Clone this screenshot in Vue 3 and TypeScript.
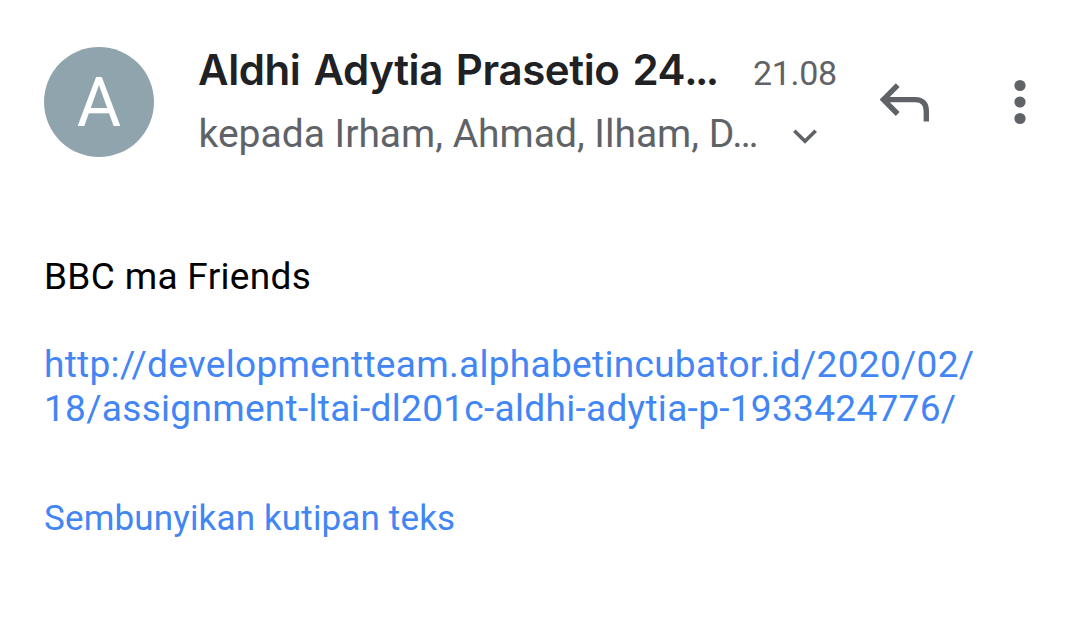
<script setup lang="ts">
const sender: string = 'Aldhi Adytia Prasetio 24'
const recipients: string = 'kepada Irham, Ahmad, Ilham, D…'
const linkLines: string[] = [
  'http://developmentteam.alphabetincubator.id/2020/02/',
  '18/assignment-ltai-dl201c-aldhi-adytia-p-1933424776/',
]
</script>

<template>
  <main class="mail">
    <header class="head">
      <div class="avatar">A</div>
      <div class="meta">
        <div class="row top">
          <span class="sender">{{ sender }}<span class="dots">...</span></span>
          <time class="time">21.08</time>
        </div>
        <div class="row sub">
          <span class="recipients">{{ recipients }}</span>
          <svg class="chevron" width="28" height="20" viewBox="0 0 28 20">
            <path d="M3.3 4.7L14 15.200L24.700 4.7" fill="none" stroke="#5f6368" stroke-width="3.7" />
          </svg>
        </div>
      </div>
      <svg class="reply" width="52" height="44" viewBox="0 0 52 44">
        <path d="M17.700 3.200L3.400 17.600L17.700 32M3.400 17.600H35.500C42.500 17.600 46.300 22 46.300 29V39.500" fill="none" stroke="#5f6368" stroke-width="5.400" />
      </svg>
      <svg class="more" width="12" height="46" viewBox="0 0 12 46">
        <circle cx="6" cy="6.500" r="5.600" fill="#5f6368" />
        <circle cx="6" cy="23" r="5.600" fill="#5f6368" />
        <circle cx="6" cy="39.500" r="5.600" fill="#5f6368" />
      </svg>
    </header>
    <p class="body">BBC ma Friends</p>
    <a class="link"><span v-for="line in linkLines" :key="line" class="line">{{ line }}</span></a>
    <a class="quote">Sembunyikan kutipan teks</a>
  </main>
</template>

<style>
body { background: #fff; }
</style>

<style scoped>
.mail { box-sizing: border-box; width: 1080px; height: 634px; padding: 47px 0 0 44px; background: #fff; font-family: Roboto, sans-serif; font-size: 37px; line-height: 44px; white-space: nowrap; overflow: hidden; }
.head { display: flex; align-items: flex-start; height: 110px; }
.avatar { width: 110px; height: 110px; border-radius: 50%; background: #90a4ae; color: #fff; font-size: 68px; line-height: 112px; text-align: center; }
.meta { width: 682px; margin-left: 44px; }
.row { display: flex; }
.top { height: 62px; line-height: 46px; }
.sender { width: 555px; color: #202124; font-family: Inter, sans-serif; font-size: 42px; font-weight: 600; letter-spacing: -0.4px; word-spacing: 2.8px; }
.dots { margin-left: -1px; letter-spacing: -2.6px; }
.time { color: #5f6368; font-size: 34px; line-height: 53px; letter-spacing: -0.3px; }
.sub { height: 48px; line-height: 50px; color: #5f6368; font-size: 39px; }
.recipients { box-sizing: border-box; width: 593px; padding-left: 0.5px; }
.chevron { margin-top: 17px; }
.reply { margin-top: 35px; }
.more { margin: 32px 0 0 82px; }
.body { margin: 98px 0 0; color: #000; letter-spacing: 0.32px; }
.link { display: block; margin-top: 44px; color: #4285f4; letter-spacing: 0.31px; }
.line { display: block; }
.quote { display: block; margin-top: 66px; color: #4285f4; font-size: 35px; letter-spacing: 0.15px; }
</style>
